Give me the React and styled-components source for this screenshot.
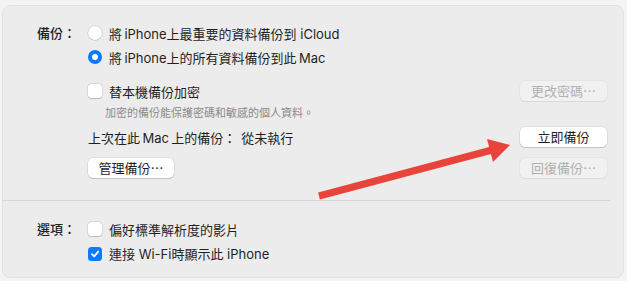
import styled, { createGlobalStyle } from "styled-components";

const GlobalStyle = createGlobalStyle`
    html, body {
        margin: 0;
        padding: 0;
        background: #f4f4f4;
    }
    body {
        font-family: "Inter", "Noto Sans CJK TC", sans-serif;
        font-size: 13px;
        color: #1f1f1f;
        -webkit-font-smoothing: antialiased;
    }
`;

const Page = styled.div`
    width: 627px;
    height: 281px;
    padding: 5px 3px 3px 2px;
    box-sizing: border-box;
`;

const Panel = styled.div`
    position: relative;
    height: 100%;
    background: #ececec;
    border: 1px solid #e2e2e2;
    border-radius: 8px;
    box-sizing: border-box;
    display: flex;
    flex-direction: column;
`;

const Section = styled.div`
    display: flex;
    padding: ${props => props.$padding};
`;

const Label = styled.div`
    width: 73px;
    padding-right: 12px;
    text-align: right;
    height: 24px;
    line-height: 24px;
    flex-shrink: 0;
    font-weight: 500;
`;

const Content = styled.div`
    flex: 1;
    display: flex;
    flex-direction: column;
    padding-right: 16px;
`;

const Row = styled.div`
    display: flex;
    align-items: center;
    justify-content: space-between;
    height: ${props => props.$height || 24}px;
    margin-top: ${props => props.$top || 0}px;
`;

const Option = styled.div`
    display: flex;
    align-items: center;
    gap: 7px;
`;

const Radio = styled.span`
    width: 14px;
    height: 14px;
    border-radius: 50%;
    box-sizing: border-box;
    background: ${props => props.$on ? '#0a7aff' : '#ffffff'};
    box-shadow: ${props => props.$on ? 'none' : '0 0 0 0.5px rgba(0,0,0,0.15), 0 0.5px 1px rgba(0,0,0,0.15)'};
    display: flex;
    align-items: center;
    justify-content: center;
    &::after {
        content: "";
        display: ${props => props.$on ? 'block' : 'none'};
        width: 6px;
        height: 6px;
        border-radius: 50%;
        background: #ffffff;
    }
`;

const Box = styled.span`
    width: 14px;
    height: 14px;
    border-radius: 3.5px;
    box-sizing: border-box;
    background: ${props => props.$on ? '#0a7aff' : '#ffffff'};
    box-shadow: ${props => props.$on ? 'none' : '0 0 0 0.5px rgba(0,0,0,0.15), 0 0.5px 1px rgba(0,0,0,0.15)'};
    display: flex;
    align-items: center;
    justify-content: center;
`;

const Hint = styled.div`
    font-size: 11px;
    color: #8a8a8a;
    height: 16px;
    line-height: 16px;
    margin-top: 4px;
    padding-left: 17px;
`;

const Value = styled.span`
    margin-left: 5px;
`;

const Button = styled.button`
    font-family: inherit;
    font-size: 13px;
    height: 20px;
    width: ${props => props.$width || 87}px;
    padding: 0;
    border: none;
    border-radius: 5px;
    background: ${props => props.disabled ? '#f1f1f1' : '#ffffff'};
    color: ${props => props.disabled ? '#b0b0b0' : '#1f1f1f'};
    box-shadow: ${props => props.disabled
        ? '0 0 0 0.5px rgba(0,0,0,0.05), 0 0.5px 1px rgba(0,0,0,0.06)'
        : '0 0 0 0.5px rgba(0,0,0,0.12), 0 1px 1px rgba(0,0,0,0.12)'};
    line-height: 20px;
`;

const Divider = styled.div`
    height: 1px;
    background: #d6d6d6;
    margin-right: 13px;
`;

const ArrowLayer = styled.svg`
    position: absolute;
    left: -3px;
    top: -6px;
    width: 627px;
    height: 281px;
    pointer-events: none;
`;

const Check = () => (
    <svg width="10" height="10" viewBox="0 0 10 10">
        <path d="M2 5.2 L4.2 7.4 L8.2 2.6" fill="none" stroke="#fff" strokeWidth="1.8" strokeLinecap="round" strokeLinejoin="round" />
    </svg>
);

const App = () => {
    return (
        <Page>
            <GlobalStyle />
            <Panel>
                <Section $padding="15px 0 22px 0">
                    <Label>備份：</Label>
                    <Content>
                        <Row>
                            <Option><Radio />將{"\u2009"}iPhone上最重要的資料備份到 iCloud</Option>
                        </Row>
                        <Row>
                            <Option><Radio $on />將{"\u2009"}iPhone上的所有資料備份到此{"\u2009"}Mac</Option>
                        </Row>
                        <Row $height={20} $top={12}>
                            <Option><Box />替本機備份加密</Option>
                            <Button disabled>更改密碼⋯</Button>
                        </Row>
                        <Hint>加密的備份能保護密碼和敏感的個人資料。</Hint>
                        <Row $height={20} $top={6}>
                            <span>上次在此{"\u2009"}Mac{"\u2009"}上的備份：<Value>從未執行</Value></span>
                            <Button>立即備份</Button>
                        </Row>
                        <Row $height={20} $top={11}>
                            <Button $width={86}>管理備份⋯</Button>
                            <Button disabled>回復備份⋯</Button>
                        </Row>
                    </Content>
                </Section>
                <Divider />
                <Section $padding="16px 0 0 0">
                    <Label>選項：</Label>
                    <Content>
                        <Row>
                            <Option><Box />偏好標準解析度的影片</Option>
                        </Row>
                        <Row $height={25}>
                            <Option><Box $on><Check /></Box>連接 Wi-Fi時顯示此 iPhone</Option>
                        </Row>
                    </Content>
                </Section>
                <ArrowLayer viewBox="0 0 627 281">
                    <line x1="319" y1="196" x2="492" y2="150" stroke="#e9443b" strokeWidth="7" />
                    <polygon points="510,145 487,139 493,162" fill="#e9443b" />
                </ArrowLayer>
            </Panel>
        </Page>
    );
};

export default App;
